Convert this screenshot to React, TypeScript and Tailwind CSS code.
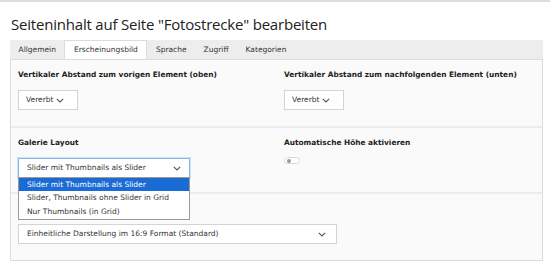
import React from "react";

const verdana = { fontFamily: '"DejaVu Sans", Verdana, sans-serif' };

const Chevron = () => (
  <svg width="8" height="5" viewBox="0 0 8 5" className="shrink-0">
    <polyline points="0.8,0.8 4,4 7.2,0.8" fill="none" stroke="#555" strokeWidth="1.1" />
  </svg>
);

const Select = ({ value, className = "", focused = false }: { value: string; className?: string; focused?: boolean }) => (
  <div
    className={`h-[20px] flex items-center justify-between bg-white border text-[7.5px] text-[#333] ${
      focused ? "border-[#86b7e8] shadow-[0_0_0_1px_#cfe3f7]" : "border-[#d4d4d4]"
    } ${className}`}
  >
    <span className="whitespace-nowrap">{value}</span>
    <Chevron />
  </div>
);

const Label = ({ children, hidden = false }: { children: React.ReactNode; hidden?: boolean }) => (
  <div className={`text-[7.4px] leading-[12px] font-bold text-[#222] whitespace-nowrap ${hidden ? "invisible" : ""}`}>
    {children}
  </div>
);

const tabs = ["Allgemein", "Erscheinungsbild", "Sprache", "Zugriff", "Kategorien"];

export default function App() {
  return (
    <div className="w-[550px] h-[271px] bg-white border-t-2 border-[#dcdcdc] overflow-hidden" style={verdana}>
      <h1
        className="ml-[11px] mt-[13px] text-[15px] leading-[18px] tracking-[-0.2px] text-[#222] whitespace-nowrap"
        style={{ fontFamily: '"Open Sans", sans-serif' }}
      >
        Seiteninhalt auf Seite "Fotostrecke" bearbeiten
      </h1>

      <div className="mx-[10px] mt-[7px] w-[533px]">
        <div className="flex h-[19px] bg-[#ededed] text-[7.5px] text-[#333]">
          {tabs.map((t) => (
            <div
              key={t}
              className={`px-[8.5px] flex items-center whitespace-nowrap ${
                t === "Erscheinungsbild" ? "bg-white border-x border-t border-[#dcdcdc]" : ""
              }`}
            >
              {t}
            </div>
          ))}
        </div>

        <div className="relative border border-[#dcdcdc] bg-[#fafafa]">
          <div className="grid grid-cols-2 gap-x-[15px] px-[7px] pt-[9px] pb-[16px] border-b-2 border-[#ececec]">
            <div className="flex flex-col gap-[9px]">
              <Label>Vertikaler Abstand zum vorigen Element (oben)</Label>
              <Select value="Vererbt" className="w-[60px] pl-[7px] pr-[13px]" />
            </div>
            <div className="flex flex-col gap-[9px]">
              <Label>Vertikaler Abstand zum nachfolgenden Element (unten)</Label>
              <Select value="Vererbt" className="w-[60px] pl-[7px] pr-[13px]" />
            </div>
          </div>

          <div className="grid grid-cols-2 gap-x-[15px] px-[7px] pt-[9px] pb-[14px] border-b-2 border-[#ececec]">
            <div className="flex flex-col gap-[9px]">
              <Label>Galerie Layout</Label>
              <Select value="Slider mit Thumbnails als Slider" className="w-[172px] pl-[8px] pr-[8px]" focused />
            </div>
            <div className="flex flex-col gap-[8px]">
              <Label>Automatische Höhe aktivieren</Label>
              <div className="w-[16px] h-[7px] rounded-full border border-[#d8d8d8] bg-white flex items-center pl-[1.5px]">
                <div className="w-[4px] h-[4px] rounded-full bg-[#9a9a9a]" />
              </div>
            </div>
          </div>

          <div className="px-[7px] pt-[9px] pb-[16px] flex flex-col gap-[9px]">
            <Label hidden>Darstellung</Label>
            <Select value="Einheitliche Darstellung im 16:9 Format (Standard)" className="w-[319px] pl-[8px] pr-[10px]" />
          </div>

          <div className="absolute left-[7px] top-[117px] w-[172px] bg-white border border-[#9a9a9a] text-[7.5px] text-[#333]">
            <div className="h-[13px] flex items-center px-[8px] bg-[#1a6bd4] text-white whitespace-nowrap">
              Slider mit Thumbnails als Slider
            </div>
            <div className="h-[14px] flex items-center px-[8px] whitespace-nowrap">Slider, Thumbnails ohne Slider in Grid</div>
            <div className="h-[14px] flex items-center px-[8px] whitespace-nowrap">Nur Thumbnails (in Grid)</div>
          </div>
        </div>
      </div>
    </div>
  );
}
